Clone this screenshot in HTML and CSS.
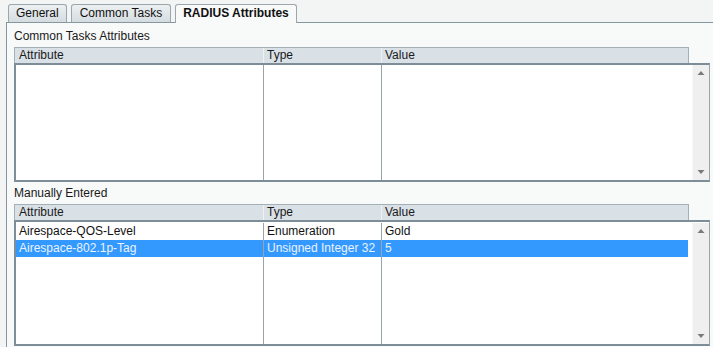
FILE: index.html
```html
<!DOCTYPE html>
<html>
<head>
    <title>RADIUS Attributes</title>
    <link rel="stylesheet" href="styles.css">
</head>
<body>
    <div class="tabs">
        <div class="tab">General</div>
        <div class="tab">Common Tasks</div>
        <div class="tab active">RADIUS Attributes</div>
    </div>

    <div class="panel">
        <div class="section-label">Common Tasks Attributes</div>
        <div class="attr-table">
            <div class="thead">
                <div class="th">Attribute</div>
                <div class="th">Type</div>
                <div class="th">Value</div>
            </div>
            <div class="tbody tbody-small">
                <table class="rows">
                    <tr class="filler"><td></td><td></td><td></td></tr>
                </table>
                <div class="scrollbar">
                    <svg class="arrow" width="16" height="16" viewBox="0 0 16 16"><polygon points="4.5,10 11.5,10 8,6" fill="#7a7a7a"/></svg>
                    <svg class="arrow" width="16" height="16" viewBox="0 0 16 16"><polygon points="4.5,6 11.5,6 8,10" fill="#7a7a7a"/></svg>
                </div>
            </div>
        </div>

        <div class="section-label second">Manually Entered</div>
        <div class="attr-table">
            <div class="thead">
                <div class="th">Attribute</div>
                <div class="th">Type</div>
                <div class="th">Value</div>
            </div>
            <div class="tbody tbody-large">
                <table class="rows">
                    <tr class="row">
                        <td>Airespace-QOS-Level</td>
                        <td>Enumeration</td>
                        <td>Gold</td>
                    </tr>
                    <tr class="row selected">
                        <td>Airespace-802.1p-Tag</td>
                        <td>Unsigned Integer 32</td>
                        <td>5</td>
                    </tr>
                    <tr class="filler"><td></td><td></td><td></td></tr>
                </table>
                <div class="scrollbar">
                    <svg class="arrow" width="16" height="16" viewBox="0 0 16 16"><polygon points="4.5,10 11.5,10 8,6" fill="#7a7a7a"/></svg>
                    <svg class="arrow" width="16" height="16" viewBox="0 0 16 16"><polygon points="4.5,6 11.5,6 8,10" fill="#7a7a7a"/></svg>
                </div>
            </div>
        </div>
    </div>
</body>
</html>
```

FILE: styles.css
```css
body {
    margin: 0;
    background-color: #f3f5f5;
    font-family: 'Liberation Sans', Arial, sans-serif;
    font-size: 12px;
    color: #111;
    overflow: hidden;
}
.tabs {
    display: flex;
    gap: 4px;
    padding: 4px 0 0 8px;
    height: 18px;
}
.tab {
    padding: 0 7px;
    border: 1px solid #9aa7ae;
    border-bottom: none;
    border-radius: 3px 3px 0 0;
    background: linear-gradient(#edf0f1, #d5dce0);
    line-height: 17px;
    color: #111;
}
.tab + .tab {
    padding: 0 8px;
}
.tab.active {
    padding: 0 7px;
    font-weight: bold;
    background: #f8f9f9;
    height: 18px;
    position: relative;
    z-index: 1;
}
.panel {
    margin: 0 -20px 0 6px;
    border: 1px solid #8797a0;
    background-color: #f8f9f9;
    padding: 5px 0 1px 7px;
}
.section-label {
    line-height: 16px;
    margin-bottom: 3px;
    color: #1a1a1a;
}
.section-label.second {
    margin-top: 3px;
    margin-bottom: 3px;
}
.attr-table {
    width: 696px;
}
.thead {
    display: grid;
    grid-template-columns: 248px 118px 1fr;
    width: 673px;
    border: 1px solid #a3b0b7;
    border-bottom: none;
    background-color: #d9e1e7;
    line-height: 15px;
}
.th {
    padding-left: 4px;
    color: #1a1a1a;
}
.th + .th {
    border-left: 1px solid #eef2f5;
    padding-left: 3px;
}
.tbody {
    display: flex;
    box-sizing: border-box;
    border-top: 2px solid #7d8e98;
    border-left: 2px solid #7d8e98;
    border-bottom: 2px solid #7d8e98;
    border-right: 1px solid #98a4aa;
    background: white;
}
.tbody-small {
    height: 119px;
}
.tbody-large {
    height: 126px;
    padding-top: 1px;
}
.rows {
    width: 673px;
    height: 100%;
    border-collapse: collapse;
    table-layout: fixed;
}
.rows td {
    padding: 0 0 0 3px;
    line-height: 17px;
    white-space: nowrap;
    overflow: hidden;
}
.rows td:nth-child(1) {
    width: 244px;
}
.rows td:nth-child(2) {
    width: 114px;
    border-left: 1px solid #9aa3a8;
}
.rows td:nth-child(3) {
    border-left: 1px solid #9aa3a8;
}
.row td {
    height: 17px;
}
.row.selected td {
    background-color: #3399ff;
    color: #eaf3ff;
}
.filler td {
    height: auto;
}
.scrollbar {
    margin-left: 4px;
    width: 16px;
    background-color: #efefef;
    border-left: 1px solid #f7f7f7;
    display: flex;
    flex-direction: column;
    justify-content: space-between;
}
.arrow {
    display: block;
}
```
